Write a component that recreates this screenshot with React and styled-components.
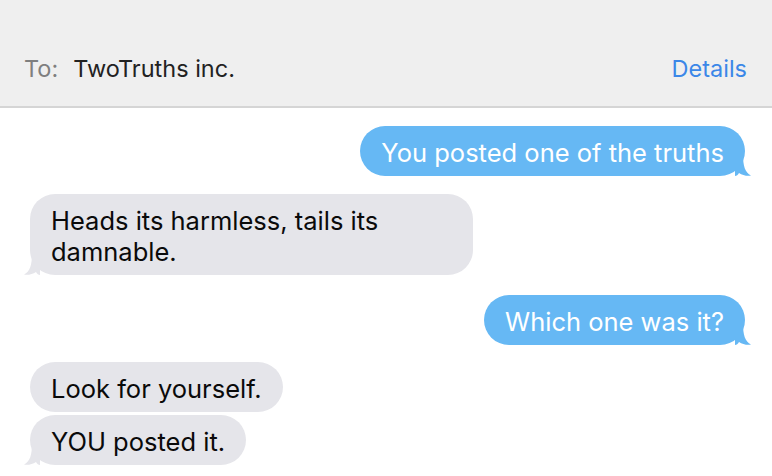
import React from "react";
import styled, { createGlobalStyle } from "styled-components";

const Global = createGlobalStyle`
  html, body { margin: 0; padding: 0; background: #ffffff; }
  body { font-family: Inter, "Noto Sans", "Liberation Sans", sans-serif; -webkit-font-smoothing: antialiased; }
  * { box-sizing: border-box; }
`;

const Screen = styled.div`
  width: 772px;
  height: 476px;
  overflow: hidden;
  background: #ffffff;
  display: flex;
  flex-direction: column;
`;

const Header = styled.header`
  height: 108px;
  flex: none;
  background: #efefef;
  border-bottom: 2px solid #d5d5d5;
  display: flex;
  align-items: flex-start;
  justify-content: space-between;
  padding: 54px 25px 0 24px;
  font-size: 23.5px;
  line-height: 30px;
`;

const Recipient = styled.div`
  display: flex;
  gap: 15px;
`;

const Label = styled.span`
  color: #7f7f7f;
`;

const Name = styled.span`
  color: #222222;
`;

const DetailsLink = styled.span`
  color: #3b87e8;
`;

const Thread = styled.div`
  display: flex;
  flex-direction: column;
  padding: 18px 27px 0 30px;
`;

const Row = styled.div`
  display: flex;
  justify-content: ${(p) => (p.$mine ? "flex-end" : "flex-start")};
  margin-top: ${(p) => p.$gap || 0}px;
`;

const Bubble = styled.div`
  position: relative;
  max-width: 443px;
  padding: 10.5px 21px 8.5px 21px;
  border-radius: 25px;
  font-size: 25.5px;
  line-height: 31px;
  background: ${(p) => (p.$mine ? "#66b8f4" : "#e5e5ea")};
  color: ${(p) => (p.$mine ? "#ffffff" : "#0a0a0a")};
`;

const Tail = styled.svg`
  position: absolute;
  bottom: 0;
  width: 18px;
  height: 22px;
  ${(p) => (p.$mine ? "right: -8px;" : "left: -8px; transform: scaleX(-1);")}
`;

function BubbleTail({ mine }) {
  return (
    <Tail $mine={mine} viewBox="0 0 18 22" aria-hidden="true">
      <path
        d="M0 0 L8 0 C8 12 10 18.5 16 21.6 C12 22.3 7.5 21.4 4 19 C3 20.7 1.5 22 0 22 Z"
        fill={mine ? "#66b8f4" : "#e5e5ea"}
      />
    </Tail>
  );
}

function Message({ mine, gap, tail, children }) {
  return (
    <Row $mine={mine} $gap={gap}>
      <Bubble $mine={mine}>
        {children}
        {tail && <BubbleTail mine={mine} />}
      </Bubble>
    </Row>
  );
}

export default function App() {
  return (
    <>
      <Global />
      <Screen>
        <Header>
          <Recipient>
            <Label>To:</Label>
            <Name>TwoTruths inc.</Name>
          </Recipient>
          <DetailsLink>Details</DetailsLink>
        </Header>
        <Thread>
          <Message mine tail>You posted one of the truths</Message>
          <Message gap={18} tail>Heads its harmless, tails its damnable.</Message>
          <Message mine gap={20} tail>Which one was it?</Message>
          <Message gap={17}>Look for yourself.</Message>
          <Message gap={3} tail>YOU posted it.</Message>
        </Thread>
      </Screen>
    </>
  );
}
